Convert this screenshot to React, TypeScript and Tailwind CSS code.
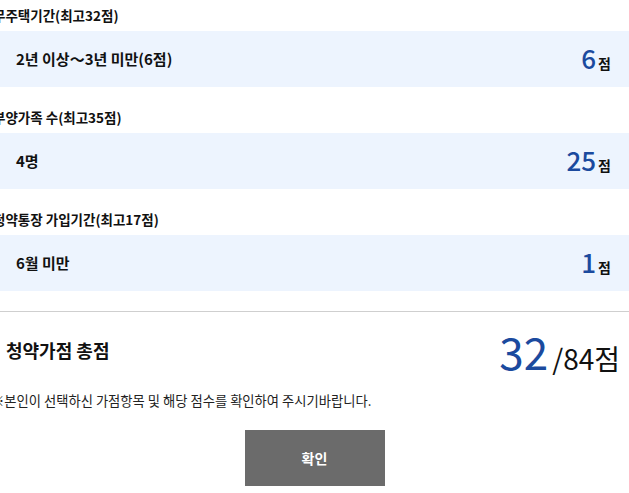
import React from "react";

const font = { fontFamily: '"Noto Sans CJK KR", "Noto Sans", sans-serif' };

function Row({ label, value, score }: { label: string; value: string; score: string }) {
  return (
    <div>
      <div className="h-[31px] flex items-center -ml-[7px] text-[13.5px] font-bold text-[#111]">{label}</div>
      <div className="h-[56px] bg-[#edf4fe] flex items-center justify-between pl-[16px] pr-[18px]">
        <span className="text-[15px] font-bold text-[#111]">{value}</span>
        <span className="flex items-baseline">
          <span className="text-[26px] leading-none font-medium text-[#1b4a9e]">{score}</span>
          <span className="text-[14px] font-bold text-[#111] ml-[2px]">점</span>
        </span>
      </div>
    </div>
  );
}

export default function App() {
  return (
    <div className="w-[629px] h-[493px] bg-white overflow-hidden" style={font}>
      <div className="flex flex-col gap-[15px]">
        <Row label="무주택기간(최고32점)" value="2년 이상～3년 미만(6점)" score="6" />
        <Row label="부양가족 수(최고35점)" value="4명" score="25" />
        <Row label="청약통장 가입기간(최고17점)" value="6월 미만" score="1" />
      </div>
      <div className="mt-[20px] border-t border-[#cfcfcf] flex items-center justify-between h-[78px] pl-[6px] pr-[9px]">
        <span className="text-[18px] font-bold text-[#111]">청약가점 총점</span>
        <span className="flex items-baseline">
          <span className="text-[44px] leading-none text-[#1b4a9e]">32</span>
          <span className="text-[28px] leading-none text-[#111] ml-[4px]">/84점</span>
        </span>
      </div>
      <div className="-ml-[9px] text-[13.3px] text-[#222] h-[24px] flex items-center">※본인이 선택하신 가점항목 및 해당 점수를 확인하여 주시기바랍니다.</div>
      <div className="flex justify-center mt-[17px]">
        <button className="w-[140px] h-[56px] bg-[#6b6b6b] text-white text-[14px] font-bold">확인</button>
      </div>
    </div>
  );
}
